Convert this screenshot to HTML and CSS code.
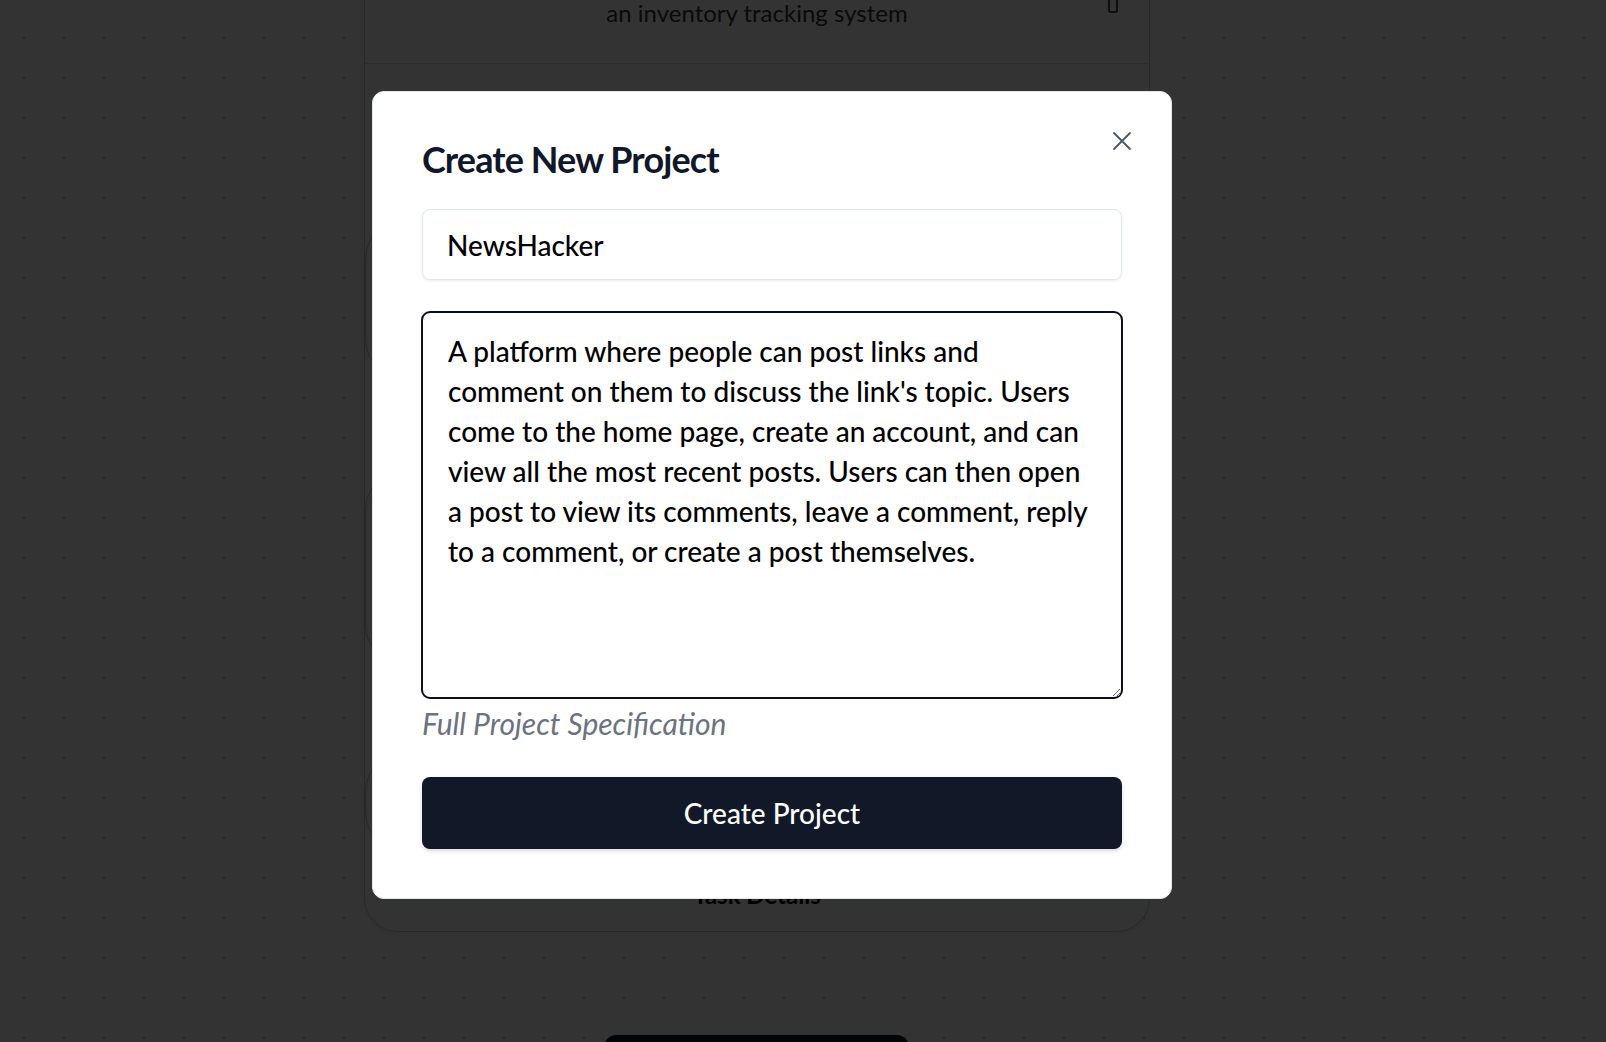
FILE: index.html
```html
<!DOCTYPE html>
<html>
<head>
    <meta charset="utf-8">
    <meta name="viewport" content="width=device-width, initial-scale=1.0">
    <title>Create New Project</title>
    <link rel="stylesheet" href="styles.css">
</head>
<body>
    <div id="page">
        <div class="project-card">
            <div class="card-head">
                <span></span>
                <p class="card-desc">an inventory tracking system</p>
                <svg class="trash-icon" width="12" height="16" viewBox="0 0 12 16" fill="none" stroke="currentColor" stroke-width="1.5">
                    <rect x="2" y="1" width="8" height="14" rx="1"/>
                </svg>
            </div>
            <div class="card-body">
                <div class="sub-card first"></div>
                <div class="sub-card second"></div>
                <div class="sub-card third"></div>
            </div>
            <p class="card-foot">Task Details</p>
        </div>
        <button class="page-btn" aria-label="Generate tasks"></button>
    </div>

    <div class="overlay">
        <div class="modal">
            <button class="close-btn" aria-label="Close">
                <svg width="20" height="20" viewBox="0 0 20 20" fill="none" stroke="currentColor" stroke-width="1.8" stroke-linecap="round">
                    <path d="M2 2 L18 18 M18 2 L2 18"/>
                </svg>
            </button>
            <h1>Create New Project</h1>
            <input type="text" class="name-input" value="NewsHacker">
            <textarea id="spec-textarea" class="spec-textarea" autofocus>A platform where people can post links and
comment on them to discuss the link's topic. Users
come to the home page, create an account, and can
view all the most recent posts. Users can then open
a post to view its comments, leave a comment, reply
to a comment, or create a post themselves.</textarea>
            <p class="hint">Full Project Specification</p>
            <button class="create-btn">Create Project</button>
        </div>
    </div>

    <script>
        // Put the caret at the end of the specification text
        const specTextarea = document.getElementById('spec-textarea');
        specTextarea.focus();
        specTextarea.setSelectionRange(specTextarea.value.length, specTextarea.value.length);
    </script>
</body>
</html>
```

FILE: styles.css
```css
* {
    box-sizing: border-box;
}
body {
    margin: 0;
    height: 1042px;
    overflow: hidden;
    font-family: Lato, "Liberation Sans", sans-serif;
    background-color: #fff;
    background-image: radial-gradient(circle, #c4c4c4 1.2px, transparent 1.6px);
    background-size: 40px 40px;
    background-position: 4px 18px;
}
#page {
    display: flex;
    flex-direction: column;
    align-items: flex-start;
    margin-top: -37px;
    padding-left: 364px;
}
.project-card {
    width: 786px;
    background-color: #fff;
    border: 1.5px solid #c8c8c8;
    border-radius: 34px;
    box-shadow: 0 2px 6px rgba(0, 0, 0, 0.08);
    overflow: hidden;
}
.card-head {
    display: grid;
    grid-template-columns: 1fr auto 1fr;
    align-items: start;
    height: 100px;
    padding: 35px 30px 0;
    border-bottom: 1px solid #dcdcdc;
}
.card-desc {
    margin: 0;
    font-size: 24px;
    line-height: 28px;
    color: #333;
}
.trash-icon {
    justify-self: end;
    margin-top: -2px;
    color: #111;
}
.card-body {
    display: flex;
    flex-direction: column;
    padding: 155px 0 0;
}
.sub-card {
    border: 1.5px solid #c4c4c4;
    border-radius: 40px;
}
.sub-card.first {
    height: 160px;
}
.sub-card.second {
    height: 195px;
    margin-top: 91px;
}
.sub-card.third {
    height: 100px;
    margin-top: 87px;
}
.card-foot {
    margin: 30px 0 23px;
    font-size: 24px;
    line-height: 26px;
    font-weight: 700;
    text-align: center;
    color: #000;
}
.page-btn {
    margin: 103px 0 0 240px;
    width: 305px;
    height: 56px;
    border: none;
    border-radius: 12px;
    background-color: #111827;
}

.overlay {
    position: fixed;
    inset: 0;
    display: flex;
    align-items: flex-start;
    padding: 91px 0 0 372px;
    background-color: rgba(0, 0, 0, 0.8);
}
.modal {
    position: relative;
    display: flex;
    flex-direction: column;
    width: 800px;
    padding: 49px;
    background-color: #fff;
    border: 1px solid #e2e8f0;
    border-radius: 12px;
}
.close-btn {
    position: absolute;
    top: 39px;
    right: 39px;
    width: 20px;
    height: 20px;
    padding: 0;
    border: none;
    background: none;
    color: #4b5563;
    cursor: pointer;
}
.close-btn svg {
    display: block;
}
h1 {
    margin: 0 0 32px;
    font-size: 36px;
    line-height: 36px;
    font-weight: 700;
    letter-spacing: -0.025em;
    color: #0f172a;
}
.name-input {
    display: block;
    width: 100%;
    height: 71px;
    margin: 0 0 31px;
    padding: 0 24px;
    font-family: inherit;
    font-size: 28px;
    font-weight: 500;
    color: #000;
    border: 1px solid #e2e8f0;
    border-radius: 8px;
    box-shadow: 0 1px 3px rgba(0, 0, 0, 0.08);
    outline: none;
}
.spec-textarea {
    display: block;
    width: calc(100% + 2px);
    height: 388px;
    margin: 0 -1px;
    padding: 18px 25px;
    font-family: inherit;
    font-size: 28px;
    font-weight: 500;
    line-height: 40px;
    color: #000;
    caret-color: #000;
    border: 2px solid #0b0f19;
    border-radius: 9px;
    outline: none;
    resize: vertical;
    white-space: pre-wrap;
}
.hint {
    margin: 8px 0 38px;
    font-size: 30px;
    line-height: 32px;
    font-style: italic;
    color: #6b7280;
}
.create-btn {
    width: 100%;
    height: 72px;
    font-family: inherit;
    font-size: 28px;
    font-weight: 500;
    color: #fff;
    background-color: #111827;
    border: none;
    border-radius: 8px;
    box-shadow: 0 2px 4px rgba(0, 0, 0, 0.15);
    cursor: pointer;
}
```
